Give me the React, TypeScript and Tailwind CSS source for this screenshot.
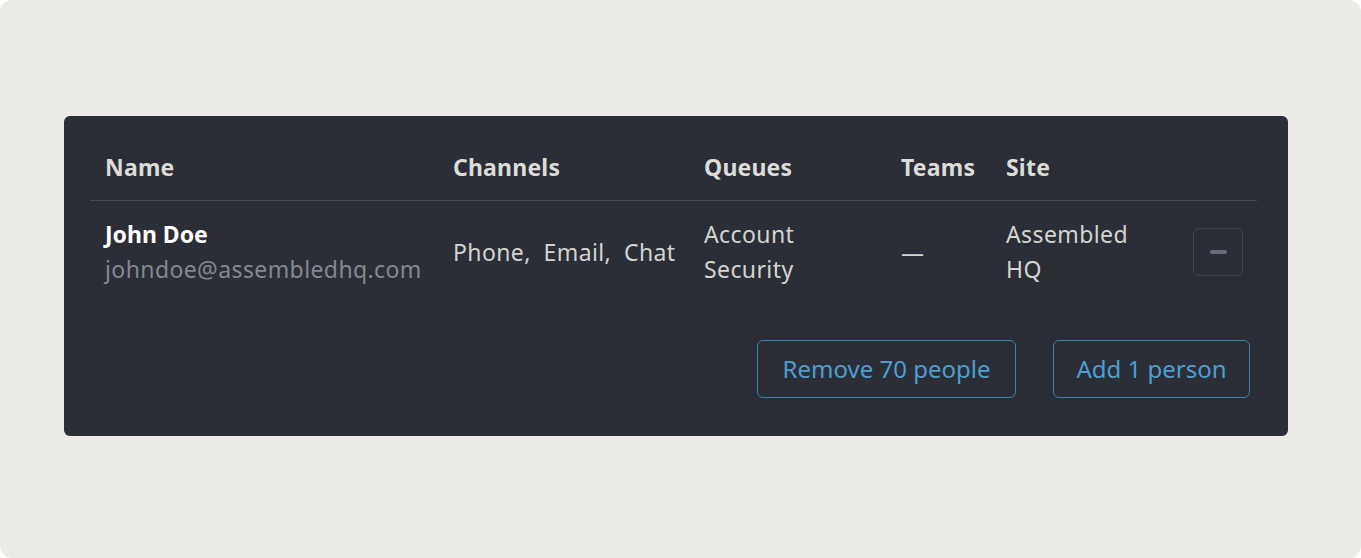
const cols = 'grid grid-cols-[348px_251px_197px_105px_187px_79px]';

export default function App() {
  return (
    <div className="w-[1361px] h-[558px] bg-white">
      <div
        className="w-full h-full rounded-xl bg-[#ebeae6] pt-[116px] pl-[64px]"
        style={{ fontFamily: '"Noto Sans", "Open Sans", sans-serif' }}
      >
        <div className="w-[1224px] h-[320px] rounded-md bg-[#2b2e36] pl-[26px] pr-[31px] pt-[18px]">
          <div className={`${cols} border-b border-[#454955] text-[23px] leading-[35px] font-bold text-[#dcdcd8] tracking-[0.2px]`}>
            <div className="px-[15px] pt-[16px] pb-[15px]">Name</div>
            <div className="px-[15px] pt-[16px] pb-[15px]">Channels</div>
            <div className="px-[15px] pt-[16px] pb-[15px]">Queues</div>
            <div className="px-[15px] pt-[16px] pb-[15px]">Teams</div>
            <div className="px-[15px] pt-[16px] pb-[15px]">Site</div>
            <div />
          </div>
          <div className={`${cols} items-center text-[23px] leading-[35px] text-[#d4d4d0] tracking-[0.4px] pt-[16px] pb-[17px]`}>
            <div className="px-[15px]">
              <div className="font-bold text-white tracking-[0px]">John Doe</div>
              <div className="text-[#84888f]">johndoe@assembledhq.com</div>
            </div>
            <div className="px-[15px] whitespace-nowrap">Phone,&nbsp; Email,&nbsp; Chat</div>
            <div className="px-[15px]">
              <div>Account</div>
              <div>Security</div>
            </div>
            <div className="px-[15px]">—</div>
            <div className="px-[15px]">
              <div>Assembled</div>
              <div>HQ</div>
            </div>
            <div className="pl-[15px] pr-[14px]">
              <button className="w-[50px] h-[48px] rounded-md border-[1.5px] border-[#424652] flex items-center justify-center">
                <span className="block w-[17px] h-[4px] rounded-full bg-[#676c7c]" />
              </button>
            </div>
          </div>
          <div className="flex justify-end gap-[37px] pr-[7px] pt-[36px]">
            <button className="h-[58px] w-[259px] rounded-md border border-[#3d82ad] text-[24px] text-[#4b9fd1]">
              Remove 70 people
            </button>
            <button className="h-[58px] w-[197px] rounded-md border border-[#3d82ad] text-[24px] text-[#4b9fd1]">
              Add 1 person
            </button>
          </div>
        </div>
      </div>
    </div>
  );
}
